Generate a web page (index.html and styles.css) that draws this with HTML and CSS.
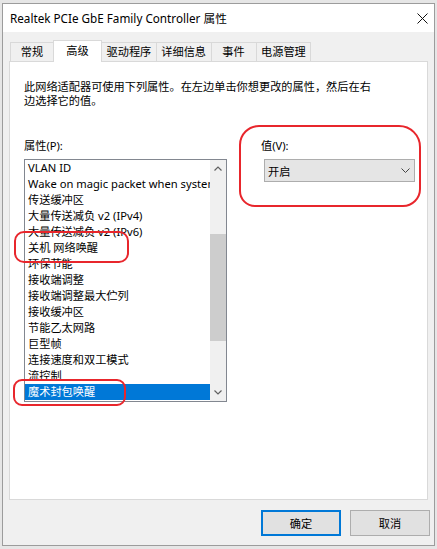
FILE: index.html
```html
<!DOCTYPE html>
<html lang="zh-CN">
<head>
<meta charset="utf-8">
<title>Realtek PCIe GbE Family Controller 属性</title>
<link rel="stylesheet" href="styles.css">
</head>
<body>
<div class="screen">
  <div class="window">
    <div class="titlebar">
      <span class="title">Realtek PCIe GbE Family Controller 属性</span>
      <svg class="close" viewBox="0 0 11 11" width="11" height="11"><path d="M0.5 0.5 L10.5 10.5 M10.5 0.5 L0.5 10.5" stroke="#111" stroke-width="1" fill="none"/></svg>
    </div>
    <div class="dialog">
      <div class="tabs">
        <div class="tab">常规</div>
        <div class="tab active">高级</div>
        <div class="tab">驱动程序</div>
        <div class="tab">详细信息</div>
        <div class="tab">事件</div>
        <div class="tab">电源管理</div>
      </div>
      <div class="panel">
        <p class="desc">此网络适配器可使用下列属性。在左边单击你想更改的属性，然后在右<br>边选择它的值。</p>
        <div class="fields">
          <div class="prop-col">
            <div class="label">属性(P):</div>
            <div class="listbox">
              <ul class="items">
                <li class="item">VLAN ID</li>
                <li class="item">Wake on magic packet when system is in the S0ix power state</li>
                <li class="item">传送缓冲区</li>
                <li class="item">大量传送减负 v2 (IPv4)</li>
                <li class="item">大量传送减负 v2 (IPv6)</li>
                <li class="item">关机 网络唤醒</li>
                <li class="item">环保节能</li>
                <li class="item">接收端调整</li>
                <li class="item">接收端调整最大伫列</li>
                <li class="item">接收缓冲区</li>
                <li class="item">节能乙太网路</li>
                <li class="item">巨型帧</li>
                <li class="item">连接速度和双工模式</li>
                <li class="item">流控制</li>
                <li class="item selected">魔术封包唤醒</li>
              </ul>
              <div class="scrollbar">
                <div class="sb-btn"><svg viewBox="0 0 8 5" width="8" height="5"><path d="M0.5 4.5 L4 1 L7.5 4.5" stroke="#606060" stroke-width="1.2" fill="none"/></svg></div>
                <div class="sb-track"><div class="sb-thumb" style="margin-top:57px;height:107px"></div></div>
                <div class="sb-btn"><svg viewBox="0 0 8 5" width="8" height="5"><path d="M0.5 0.5 L4 4 L7.5 0.5" stroke="#606060" stroke-width="1.2" fill="none"/></svg></div>
              </div>
            </div>
          </div>
          <div class="value-col">
            <div class="label">值(V):</div>
            <div class="select">
              <span>开启</span>
              <svg viewBox="0 0 9 5" width="9" height="5"><path d="M0.5 0.5 L4.5 4.5 L8.5 0.5" stroke="#444" stroke-width="1" fill="none"/></svg>
            </div>
          </div>
        </div>
      </div>
      <div class="buttons">
        <div class="btn default">确定</div>
        <div class="btn">取消</div>
      </div>
    </div>
  </div>
  <div class="mark mark-value"></div>
  <div class="mark mark-shutdown"></div>
  <div class="mark mark-magic"></div>
</div>
</body>
</html>
```
FILE: styles.css
```css
* { box-sizing: border-box; }
html, body { margin: 0; padding: 0; }
body {
  background: #e6e6e6;
  font-family: "Noto Sans", "Noto Sans CJK SC", sans-serif;
  font-size: 11.2px;
  color: #000;
}
.screen {
  position: relative;
  width: 437px;
  height: 549px;
  padding: 3px 0 0 2px;
  overflow: hidden;
}
.window {
  width: 433px;
  height: 543px;
  border: 1px solid #9c9c9c;
  background: #f0f0f0;
  display: flex;
  flex-direction: column;
}
.titlebar {
  height: 28px;
  flex: none;
  background: #fff;
  display: flex;
  align-items: center;
  justify-content: space-between;
  padding: 0 6px 0 7px;
}
.title { font-size: 11.7px; line-height: 14px; }
.close { display: block; }
.dialog {
  flex: 1;
  display: flex;
  flex-direction: column;
  padding: 8px 6px 9px 6px;
}
.tabs {
  display: flex;
  align-items: flex-end;
  height: 21px;
  padding-left: 1px;
  position: relative;
  z-index: 1;
}
.tab {
  height: 19px;
  line-height: 18px;
  min-width: 44px;
  padding: 0 4.5px;
  text-align: center;
  border: 1px solid #d9d9d9;
  border-bottom: none;
  margin-right: -1px;
  background: #f0f0f0;
  white-space: nowrap;
}
.tab.active {
  height: 22px;
  line-height: 20px;
  min-width: 49px;
  margin-bottom: -1px;
  background: #fff;
}
.tab:nth-child(5) { min-width: 46px; }
.panel {
  height: 439px;
  flex: none;
  border: 1px solid #d9d9d9;
  background: #fff;
  padding: 18px 14px 0 14px;
}
.desc { margin: 0; line-height: 14px; }
.fields { display: flex; margin-top: 31px; }
.prop-col { width: 203px; flex: none; }
.label { height: 14px; line-height: 14px; margin-bottom: 6px; }
.listbox {
  height: 243px;
  border: 1px solid #828790;
  background: #fff;
  display: flex;
}
.items {
  flex: 1;
  min-width: 0;
  list-style: none;
  margin: 0;
  padding: 0;
  overflow: hidden;
}
.item {
  height: 16px;
  line-height: 16px;
  padding-left: 3px;
  white-space: nowrap;
  overflow: hidden;
}
.item.selected { background: #0078d7; color: #fff; }
.scrollbar {
  width: 16px;
  flex: none;
  background: #f0f0f0;
  display: flex;
  flex-direction: column;
}
.sb-btn {
  height: 17px;
  flex: none;
  display: flex;
  align-items: center;
  justify-content: center;
}
.sb-btn svg { display: block; }
.sb-track { flex: 1; }
.sb-thumb { background: #cdcdcd; }
.value-col { margin-left: 34px; flex: 1; }
.select {
  margin-left: 3px;
  margin-top: 1px;
  width: 151px;
  height: 23px;
  border: 1px solid #adadad;
  background: #e5e5e5;
  display: flex;
  align-items: center;
  justify-content: space-between;
  padding: 0 4px 0 3px;
}
.select svg { display: block; }
.buttons {
  margin-top: 10px;
  margin-right: -2px;
  display: flex;
  justify-content: flex-end;
  gap: 9px;
}
.btn {
  width: 80px;
  height: 26px;
  background: #e1e1e1;
  border: 1px solid #adadad;
  display: flex;
  align-items: center;
  justify-content: center;
}
.btn.default { border: 2px solid #0078d7; }
.mark {
  position: absolute;
  border: 2px solid #e8262c;
}
.mark-value { left: 239px; top: 125px; width: 182px; height: 82px; border-radius: 20px 22px 18px 16px; }
.mark-shutdown { left: 14px; top: 231px; width: 115px; height: 32px; border-radius: 10px; }
.mark-magic { left: 13px; top: 379px; width: 113px; height: 27px; border-radius: 9px; }
```
